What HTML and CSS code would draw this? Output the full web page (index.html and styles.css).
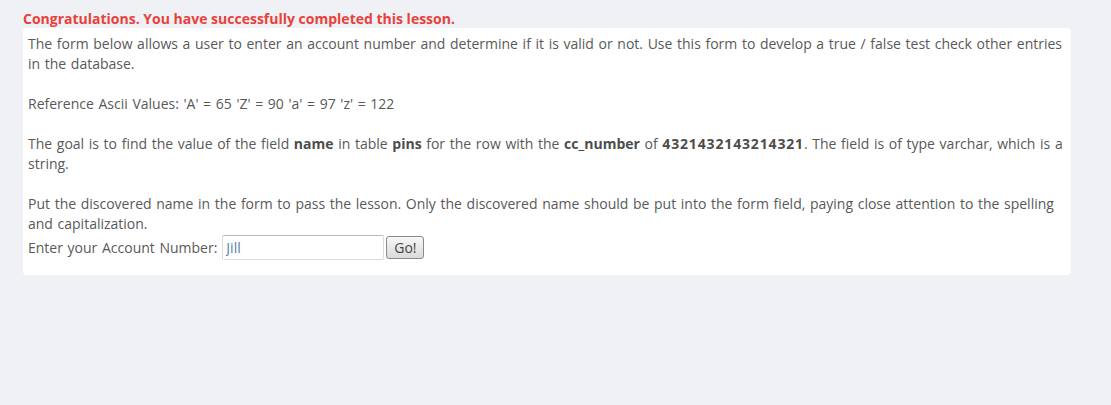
FILE: index.html
```html
<!DOCTYPE html>
<html>
<head>
<meta charset="utf-8">
<link rel="stylesheet" href="styles.css">
</head>
<body>
<div class="lesson">
  <div class="feedback">Congratulations. You have successfully completed this lesson.</div>
  <div class="panel">
    <p class="txt">The form below allows a user to enter an account number and determine if it is valid or not. Use this form to develop a true / false test check other entries in the database.</p>
    <p class="txt">Reference Ascii Values: 'A' = 65 'Z' = 90 'a' = 97 'z' = 122</p>
    <p class="txt">The goal is to find the value of the field <b>name</b> in table <b>pins</b> for the row with the <b>cc_number</b> of <b class="num">4321432143214321</b>. The field is of type varchar, which is a string.</p>
    <p class="txt last">Put the discovered name in the form to pass the lesson. Only the discovered name should be put into the form field, paying close attention to the spelling and capitalization.</p>
    <form class="form-row">
      <label class="lbl" for="acct">Enter your Account Number:</label>
      <input class="field" id="acct" type="text" value="Jill">
      <button class="go" type="button">Go!</button>
    </form>
  </div>
</div>
</body>
</html>
```
FILE: styles.css
```css
html, body {
  margin: 0;
  padding: 0;
  background: #f0f1f5;
}
body {
  font-family: "Open Sans", "Noto Sans", sans-serif;
  font-size: 14px;
  color: #595959;
}
.lesson {
  margin-left: 23px;
  width: 1048px;
  padding-top: 10px;
}
.feedback {
  color: #e8413b;
  font-weight: bold;
  font-size: 14px;
  line-height: 18px;
}
.panel {
  background: #ffffff;
  border-radius: 4px;
  padding: 6px 5px 15px 5px;
  word-spacing: 1px;
}
.txt {
  margin: 0 0 20px 0;
  line-height: 20px;
}
.txt.last {
  margin-bottom: 0;
}
.txt b {
  font-weight: bold;
  color: #4d4d4d;
}
.txt b.num {
  letter-spacing: 0.85px;
}
.form-row {
  display: flex;
  align-items: center;
  margin: 0;
  height: 26px;
}
.lbl {
  color: #595959;
  margin-right: 5px;
}
.field {
  box-sizing: border-box;
  width: 162px;
  height: 25px;
  border: 1px solid #dcdcdc;
  border-top-color: #b8b8b8;
  border-radius: 2px;
  padding: 1px 3px;
  font-family: inherit;
  font-size: 14px;
  color: #5a7fa8;
  margin: 0;
}
.go {
  box-sizing: border-box;
  width: 38px;
  height: 23px;
  margin-left: 2px;
  padding: 0;
  border: 1px solid #8a8a8a;
  border-radius: 3px;
  background: linear-gradient(#f7f7f7, #dadada);
  font-family: inherit;
  font-size: 14px;
  color: #444;
}
```
